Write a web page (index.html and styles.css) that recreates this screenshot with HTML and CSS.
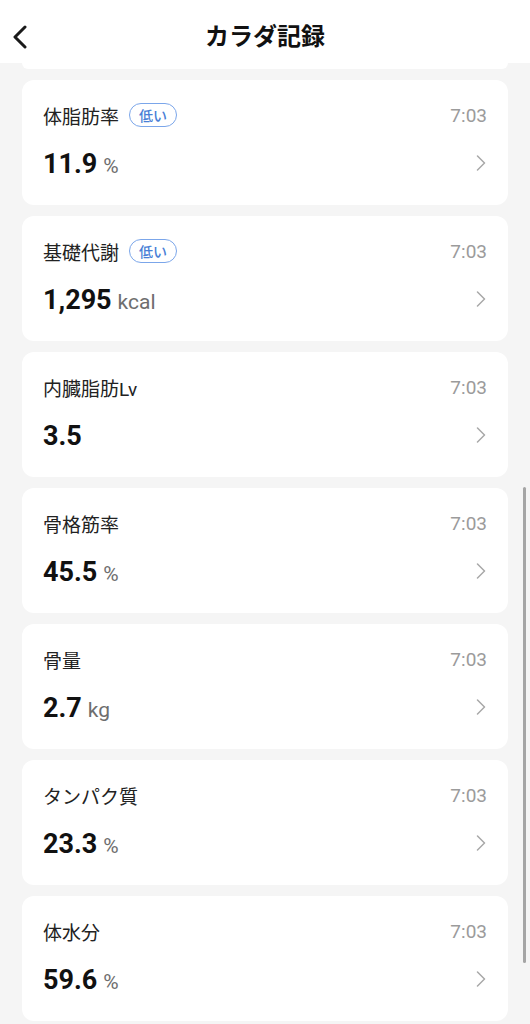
FILE: index.html
```html
<!DOCTYPE html>
<html lang="ja">
<head>
    <meta charset="UTF-8">
    <meta name="viewport" content="width=device-width, initial-scale=1.0">
    <title>カラダ記録</title>
    <link rel="stylesheet" href="styles.css">
</head>
<body>
    <div class="header">
        <button class="back" aria-label="戻る">
            <svg width="22" height="24" viewBox="0 0 22 24">
                <polyline points="16,2 6,12 16,22" fill="none" stroke="#1a1a1a" stroke-width="3" stroke-linecap="round" stroke-linejoin="round"/>
            </svg>
        </button>
        <h1>カラダ記録</h1>
    </div>

    <div class="list">
        <div class="card-end"></div>

        <div class="card">
            <div class="top">
                <span class="label">体脂肪率</span>
                <span class="badge">低い</span>
                <span class="time">7:03</span>
            </div>
            <div class="bottom">
                <span class="value">11.9</span><span class="unit">%</span>
                <svg class="chev" width="10" height="16" viewBox="0 0 10 16"><polyline points="1.5,1 8.5,8 1.5,15" fill="none" stroke="#a8a8a8" stroke-width="1.5" stroke-linecap="round" stroke-linejoin="round"/></svg>
            </div>
        </div>

        <div class="card">
            <div class="top">
                <span class="label">基礎代謝</span>
                <span class="badge">低い</span>
                <span class="time">7:03</span>
            </div>
            <div class="bottom">
                <span class="value">1,295</span><span class="unit">kcal</span>
                <svg class="chev" width="10" height="16" viewBox="0 0 10 16"><polyline points="1.5,1 8.5,8 1.5,15" fill="none" stroke="#a8a8a8" stroke-width="1.5" stroke-linecap="round" stroke-linejoin="round"/></svg>
            </div>
        </div>

        <div class="card">
            <div class="top">
                <span class="label">内臓脂肪Lv</span>
                <span class="time">7:03</span>
            </div>
            <div class="bottom">
                <span class="value">3.5</span>
                <svg class="chev" width="10" height="16" viewBox="0 0 10 16"><polyline points="1.5,1 8.5,8 1.5,15" fill="none" stroke="#a8a8a8" stroke-width="1.5" stroke-linecap="round" stroke-linejoin="round"/></svg>
            </div>
        </div>

        <div class="card">
            <div class="top">
                <span class="label">骨格筋率</span>
                <span class="time">7:03</span>
            </div>
            <div class="bottom">
                <span class="value">45.5</span><span class="unit">%</span>
                <svg class="chev" width="10" height="16" viewBox="0 0 10 16"><polyline points="1.5,1 8.5,8 1.5,15" fill="none" stroke="#a8a8a8" stroke-width="1.5" stroke-linecap="round" stroke-linejoin="round"/></svg>
            </div>
        </div>

        <div class="card">
            <div class="top">
                <span class="label">骨量</span>
                <span class="time">7:03</span>
            </div>
            <div class="bottom">
                <span class="value">2.7</span><span class="unit">kg</span>
                <svg class="chev" width="10" height="16" viewBox="0 0 10 16"><polyline points="1.5,1 8.5,8 1.5,15" fill="none" stroke="#a8a8a8" stroke-width="1.5" stroke-linecap="round" stroke-linejoin="round"/></svg>
            </div>
        </div>

        <div class="card">
            <div class="top">
                <span class="label">タンパク質</span>
                <span class="time">7:03</span>
            </div>
            <div class="bottom">
                <span class="value">23.3</span><span class="unit">%</span>
                <svg class="chev" width="10" height="16" viewBox="0 0 10 16"><polyline points="1.5,1 8.5,8 1.5,15" fill="none" stroke="#a8a8a8" stroke-width="1.5" stroke-linecap="round" stroke-linejoin="round"/></svg>
            </div>
        </div>

        <div class="card">
            <div class="top">
                <span class="label">体水分</span>
                <span class="time">7:03</span>
            </div>
            <div class="bottom">
                <span class="value">59.6</span><span class="unit">%</span>
                <svg class="chev" width="10" height="16" viewBox="0 0 10 16"><polyline points="1.5,1 8.5,8 1.5,15" fill="none" stroke="#a8a8a8" stroke-width="1.5" stroke-linecap="round" stroke-linejoin="round"/></svg>
            </div>
        </div>
    </div>

    <div class="scrollbar"></div>
</body>
</html>
```

FILE: styles.css
```css
* {
    box-sizing: border-box;
}
body {
    margin: 0;
    font-family: Roboto, "Noto Sans CJK JP", sans-serif;
    background-color: #f5f5f5;
    height: 1024px;
    overflow: hidden;
    position: relative;
}
.header {
    height: 63px;
    background: white;
    display: flex;
    align-items: center;
    justify-content: center;
    position: relative;
}
.header h1 {
    margin: 0;
    font-size: 24px;
    font-weight: bold;
    color: #111;
    padding-top: 5px;
}
.back {
    position: absolute;
    left: 9px;
    top: 25px;
    background: none;
    border: none;
    padding: 0;
}
.list {
    padding: 0 22px;
    display: flex;
    flex-direction: column;
    gap: 11px;
}
.card-end {
    height: 6px;
    background: white;
    border-radius: 0 0 12px 12px;
}
.card {
    background: white;
    border-radius: 12px;
    height: 125px;
    padding: 22px 21px 0 21px;
}
.top {
    height: 26px;
    display: flex;
    align-items: center;
}
.label {
    font-size: 19px;
    color: #222;
}
.badge {
    margin-left: 10px;
    height: 24px;
    padding: 0 9px;
    border: 1.5px solid #7ba6ea;
    border-radius: 12px;
    color: #4a7fd6;
    font-size: 14px;
    font-weight: 500;
    display: flex;
    align-items: center;
}
.time {
    margin-left: auto;
    font-size: 19px;
    color: #9b9b9b;
}
.bottom {
    margin-top: 20px;
    height: 30px;
    display: flex;
    align-items: baseline;
}
.value {
    font-size: 27px;
    font-weight: bold;
    color: #111;
}
.unit {
    margin-left: 6px;
    font-size: 21px;
    color: #6e6e6e;
}
.chev {
    margin-left: auto;
    margin-right: 1px;
    align-self: center;
}
.scrollbar {
    position: absolute;
    right: 4px;
    top: 487px;
    width: 3px;
    height: 476px;
    border-radius: 2px;
    background: #a5a5a5;
}
```
